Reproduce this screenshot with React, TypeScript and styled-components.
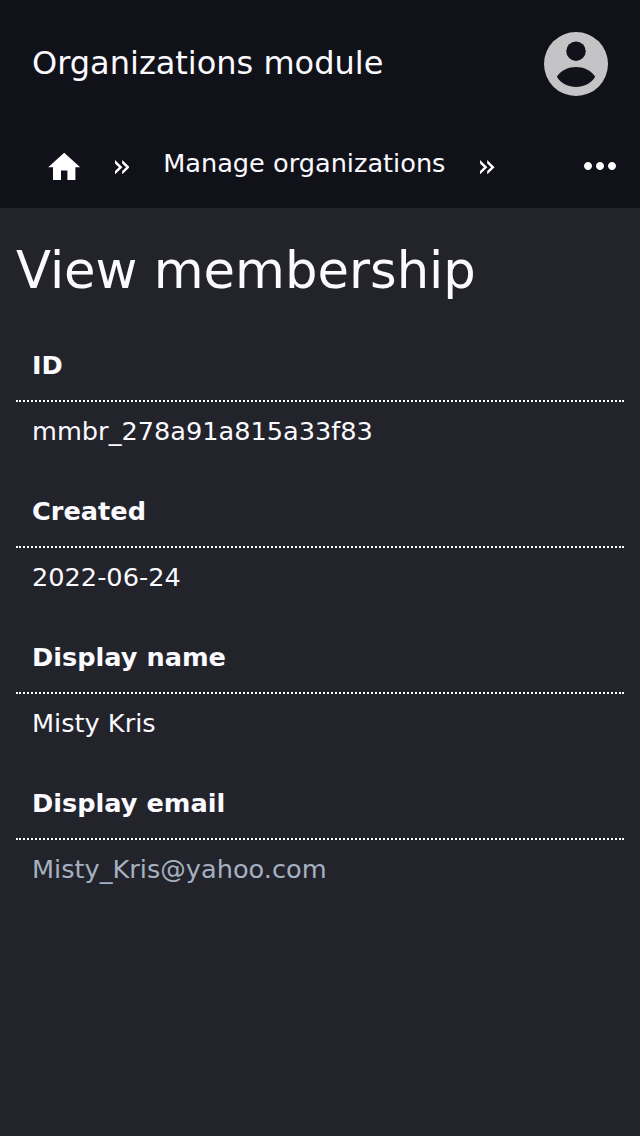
import React from 'react';
import styled, { createGlobalStyle } from 'styled-components';
import { MdHome, MdMoreHoriz } from 'react-icons/md';

const GlobalStyle = createGlobalStyle`
  * { box-sizing: border-box; }
  body {
    margin: 0;
    background: #23232b;
    color: #fafaff;
    font-family: "DejaVu Sans", sans-serif;
    font-size: 25.6px;
  }
`;

const Page = styled.div`
  min-height: 1136px;
  display: flex;
  flex-direction: column;
`;

const Header = styled.header`
  background: #11111a;
  height: 208px;
`;

const TitleBar = styled.div`
  display: flex;
  align-items: center;
  justify-content: space-between;
  height: 128px;
  padding: 0 32px;
`;

const AppTitle = styled.div`
  font-size: 32px;
  line-height: 48px;
  padding-bottom: 2px;
`;

const Avatar = styled.svg`
  width: 64px;
  height: 64px;
`;

const Breadcrumbs = styled.nav`
  display: flex;
  align-items: center;
  height: 80px;
  padding: 0 16px 4px 44.8px;
`;

const HomeIcon = styled(MdHome)`
  width: 38.4px;
  height: 38.4px;
  margin-top: 2px;
  color: #fff;
`;

const SeparatorIcon = styled.svg`
  flex: none;
  width: 14.6px;
  height: 14.4px;
  margin: 1.6px 33.8px 0 31.6px;
  fill: #fff;
`;

const Crumb = styled.a`
  line-height: 32px;
  margin: -6px 3.4px 0 0;
  white-space: nowrap;
`;

const MoreIcon = styled(MdMoreHoriz)`
  width: 48px;
  height: 48px;
  margin-left: auto;
  color: #fff;
`;

const Content = styled.main`
  padding: 32px 16px;
`;

const Heading = styled.h1`
  margin: 0 0 32px;
  font-size: 51.2px;
  font-weight: 400;
  line-height: 60px;
`;

const Details = styled.dl`
  margin: 0;
`;

const Field = styled.div`
  height: 146px;
`;

const Label = styled.dt`
  height: 70px;
  padding: 16px;
  font-weight: 700;
  line-height: 34px;
  border-bottom: 2px dotted #fff;
`;

const Value = styled.dd<{ $link?: boolean }>`
  margin: 0;
  padding: 10px 16px;
  line-height: 38px;
  color: ${({ $link }) => ($link ? '#a3b1c0' : '#fafaff')};
`;

const fields = [
  { label: 'ID', value: 'mmbr_278a91a815a33f83' },
  { label: 'Created', value: '2022-06-24' },
  { label: 'Display name', value: 'Misty Kris' },
  { label: 'Display email', value: 'Misty_Kris@yahoo.com', link: true },
];

function Separator() {
  return (
    <SeparatorIcon viewBox="0 0 14.6 14.4">
      <path d="M0 0L7.4 7.2L0 14.4V10.9L3.9 7.2L0 3.5ZM7.2 0L14.6 7.2L7.2 14.4V10.9L11.1 7.2L7.2 3.5Z" />
    </SeparatorIcon>
  );
}

export default function App() {
  return (
    <Page>
      <GlobalStyle />
      <Header>
        <TitleBar>
          <AppTitle>Organizations module</AppTitle>
          <Avatar viewBox="0 0 64 64">
            <circle cx="32" cy="32" r="32" fill="#c4c4c6" />
            <circle cx="32" cy="19.2" r="9.7" fill="#11111a" />
            <path d="M12.8 44.8C17 38 24.5 34.9 32 34.9S47 38 51.2 44.8C47 51.6 39.5 55 32 55S17 51.6 12.8 44.8Z" fill="#11111a" />
          </Avatar>
        </TitleBar>
        <Breadcrumbs>
          <HomeIcon />
          <Separator />
          <Crumb>Manage organizations</Crumb>
          <Separator />
          <MoreIcon />
        </Breadcrumbs>
      </Header>
      <Content>
        <Heading>View membership</Heading>
        <Details>
          {fields.map(({ label, value, link }) => (
            <Field key={label}>
              <Label>{label}</Label>
              <Value $link={link}>{value}</Value>
            </Field>
          ))}
        </Details>
      </Content>
    </Page>
  );
}
